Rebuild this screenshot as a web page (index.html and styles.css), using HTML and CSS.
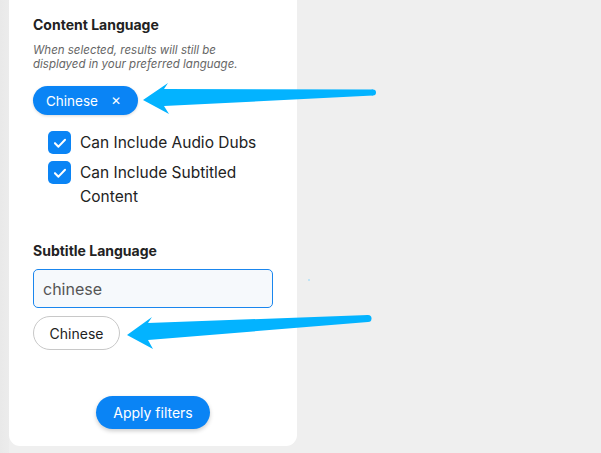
FILE: index.html
```html
<!DOCTYPE html>
<html lang="en">
<head>
<meta charset="utf-8">
<link rel="stylesheet" href="styles.css">
</head>
<body>
<div class="page">
  <div class="strip"></div>
  <section class="panel">
    <h3 class="heading">Content Language</h3>
    <p class="hint">When selected, results will still be displayed in your preferred language.</p>
    <div class="chips">
      <span class="chip">Chinese <span class="chip-x">✕</span></span>
    </div>
    <ul class="checks">
      <li class="check">
        <span class="box"><svg viewBox="0 0 24 24" width="24" height="24"><path d="M6.5 12.2l3.8 3.8 7.2-7.6" fill="none" stroke="#fff" stroke-width="2.2" stroke-linecap="round" stroke-linejoin="round"/></svg></span>
        <span class="label">Can Include Audio Dubs</span>
      </li>
      <li class="check">
        <span class="box"><svg viewBox="0 0 24 24" width="24" height="24"><path d="M6.5 12.2l3.8 3.8 7.2-7.6" fill="none" stroke="#fff" stroke-width="2.2" stroke-linecap="round" stroke-linejoin="round"/></svg></span>
        <span class="label">Can Include Subtitled Content</span>
      </li>
    </ul>
    <h3 class="heading heading-sub">Subtitle Language</h3>
    <div class="input">chinese</div>
    <div class="options">
      <span class="option">Chinese</span>
    </div>
    <div class="actions">
      <span class="apply">Apply filters</span>
    </div>
  </section>
  <svg class="arrows" width="601" height="453" viewBox="0 0 601 453">
    <polygon fill="#03b3ff" points="143,100 168,83 164,89 373,89.5 373,95.5 164,106 169,114"/>
    <circle cx="373" cy="92.5" r="3" fill="#03b3ff"/>
    <polygon fill="#03b3ff" points="127,335 152,317 148,323 368,315 368,322 148,340 153,349"/>
    <circle cx="368" cy="318.5" r="3.5" fill="#03b3ff"/>
    <rect x="308" y="279" width="2" height="2" fill="#bfe3f5"/>
  </svg>
</div>
</body>
</html>
```
FILE: styles.css
```css
* { box-sizing: border-box; }
html, body { margin: 0; padding: 0; }
body {
  background: #efefef;
  font-family: Inter, "Noto Sans", "Liberation Sans", sans-serif;
  color: #222;
  width: 601px;
  height: 453px;
  overflow: hidden;
}
.page {
  position: relative;
  display: flex;
  align-items: flex-start;
  height: 453px;
}
.strip {
  width: 9px;
  height: 453px;
  background: linear-gradient(to right, #e9e9e9, #ececec);
  flex: none;
}
.panel {
  width: 288px;
  height: 446px;
  background: #fff;
  border-radius: 0 0 11px 11px;
  padding: 15px 24px 0 24px;
  display: flex;
  flex-direction: column;
  flex: none;
}
.heading {
  margin: 0;
  font-size: 14px;
  line-height: 20px;
  font-weight: 700;
  color: #222;
}
.hint {
  margin: 8px 0 0 0;
  max-width: 225px;
  font-size: 11.5px;
  line-height: 14px;
  font-style: italic;
  color: #666;
}
.chips {
  margin-top: 15px;
  display: flex;
}
.chip {
  display: inline-flex;
  align-items: center;
  height: 29px;
  padding: 0 17px 0 13px;
  background: #0a84f5;
  color: #fff;
  border-radius: 15px;
  font-size: 13.5px;
  box-shadow: 0 1px 3px rgba(0,0,0,0.15);
}
.chip-x {
  margin-left: 13px;
  font-size: 12px;
}
.checks {
  list-style: none;
  margin: 16px 0 0 0;
  padding: 0 0 0 15px;
  display: flex;
  flex-direction: column;
  gap: 6px;
}
.check {
  display: flex;
  align-items: flex-start;
  gap: 9px;
}
.box {
  width: 23px;
  height: 23px;
  border-radius: 5px;
  background: #0a84f5;
  flex: none;
  display: flex;
  align-items: center;
  justify-content: center;
}
.box svg { width: 22px; height: 22px; }
.label {
  font-size: 15.5px;
  line-height: 24px;
  color: #222;
  width: 180px;
}
.heading-sub {
  margin-top: 32px;
}
.input {
  margin-top: 8px;
  height: 39px;
  width: 240px;
  border: 1px solid #1a86ee;
  border-radius: 5px;
  background: #f6f9fc;
  padding: 0 9px;
  display: flex;
  align-items: center;
  font-size: 16px;
  color: #555;
}
.options {
  margin-top: 8px;
  display: flex;
}
.option {
  display: inline-flex;
  align-items: center;
  justify-content: center;
  height: 34px;
  width: 87px;
  border: 1px solid #c8c8c8;
  border-radius: 17px;
  font-size: 14px;
  color: #222;
}
.actions {
  margin-top: 46px;
  display: flex;
  justify-content: center;
}
.apply {
  display: inline-flex;
  align-items: center;
  justify-content: center;
  height: 33px;
  width: 114px;
  background: #0a84f5;
  color: #fff;
  border-radius: 17px;
  font-size: 14px;
  box-shadow: 0 2px 4px rgba(0,0,0,0.2);
}
.arrows {
  position: absolute;
  left: 0;
  top: 0;
  pointer-events: none;
}
```
